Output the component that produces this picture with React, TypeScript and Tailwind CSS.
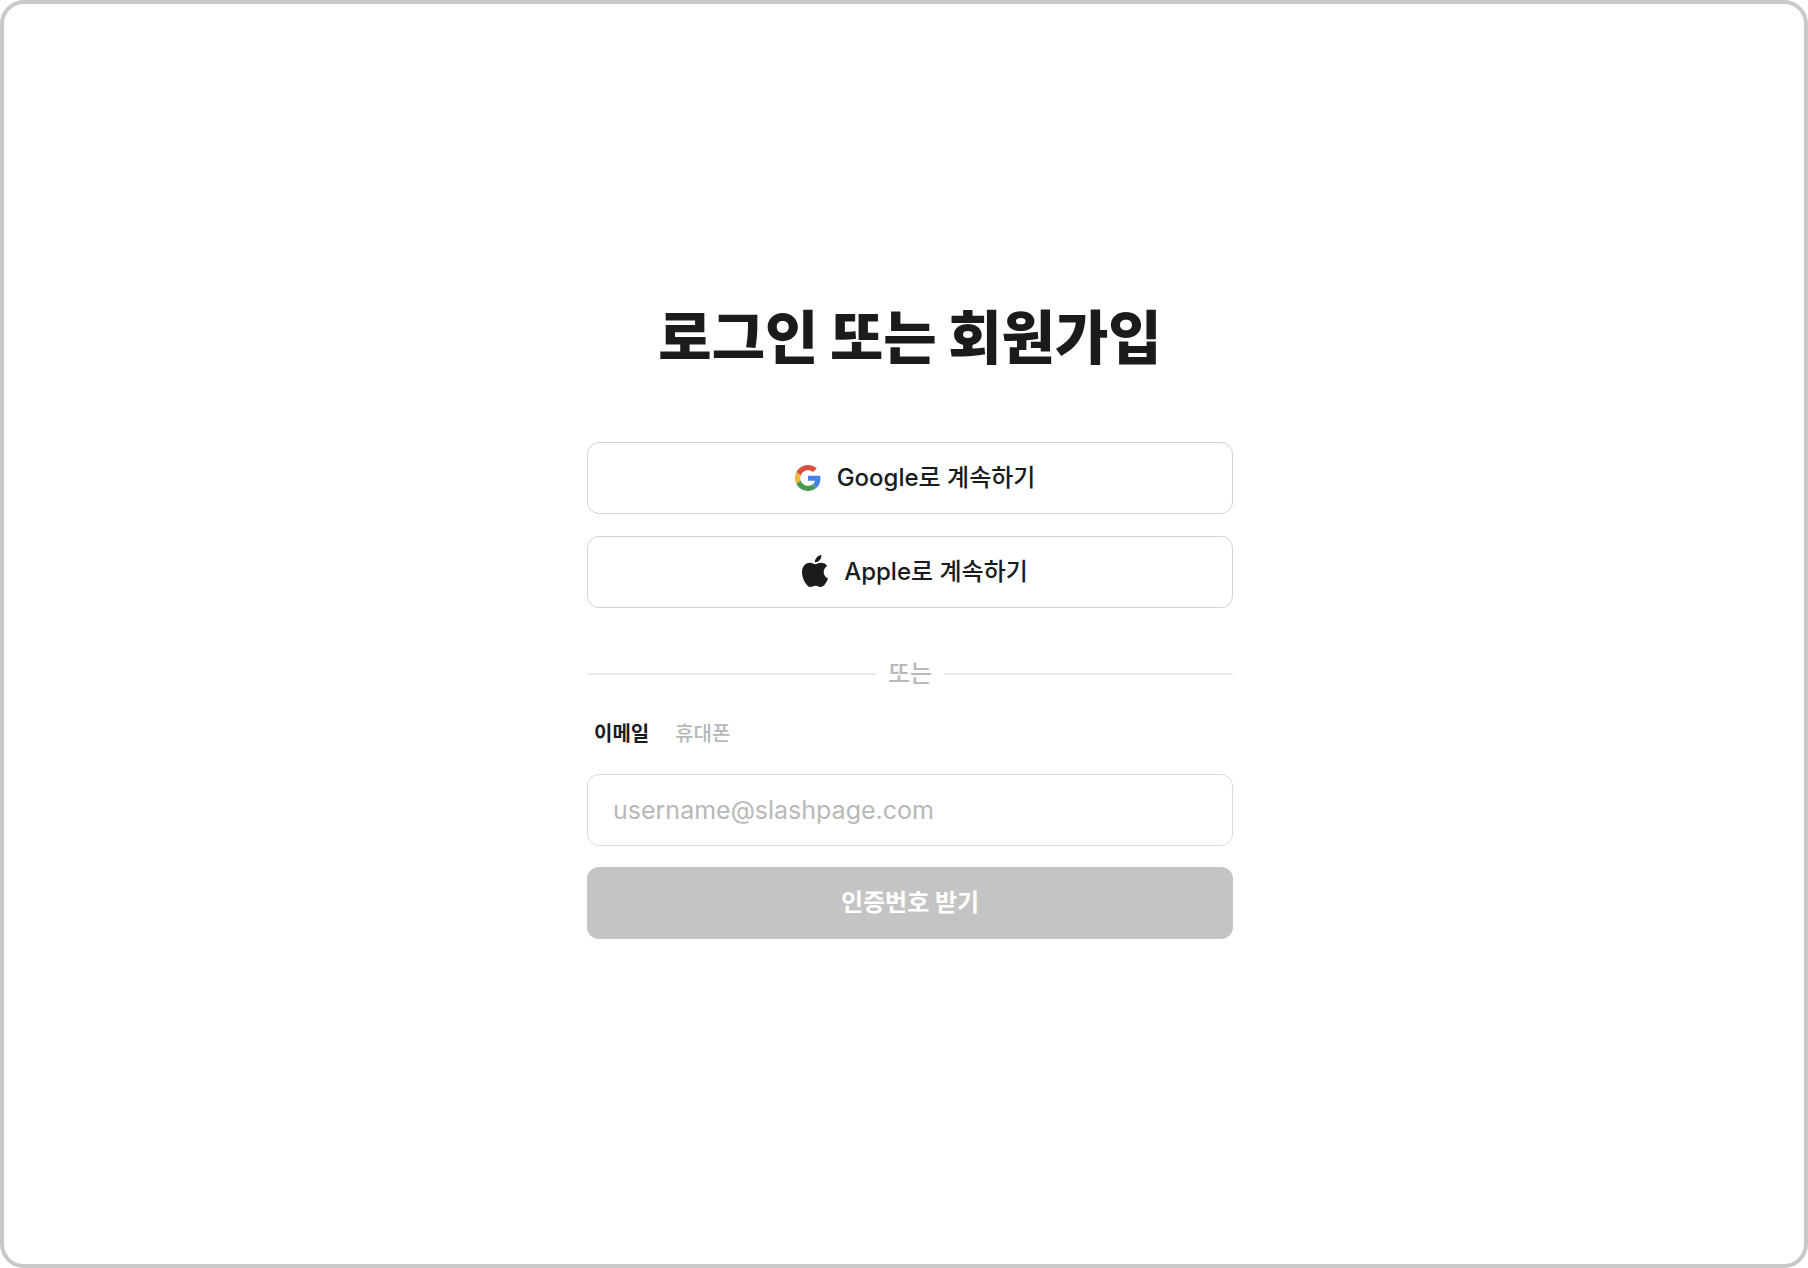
import { useState } from "react";

function GoogleLogo() {
  return (
    <svg viewBox="0 0 48 48" className="size-[26px] shrink-0" aria-hidden="true">
      <path fill="#d94f3d" d="M24 9.5c3.54 0 6.71 1.22 9.21 3.6l6.85-6.85C35.9 2.38 30.47 0 24 0 14.62 0 6.51 5.38 2.56 13.22l7.98 6.19C12.43 13.72 17.74 9.5 24 9.5z" />
      <path fill="#4580ec" d="M46.98 24.55c0-1.57-.15-3.09-.38-4.55H24v9.02h12.94c-.58 2.96-2.26 5.48-4.78 7.18l7.73 6c4.51-4.18 7.09-10.36 7.09-17.65z" />
      <path fill="#f2b63c" d="M10.53 28.59c-.48-1.45-.76-2.99-.76-4.59s.27-3.14.76-4.59l-7.98-6.19C.92 16.46 0 20.12 0 24c0 3.88.92 7.54 2.56 10.78l7.97-6.19z" />
      <path fill="#489a54" d="M24 48c6.48 0 11.93-2.13 15.89-5.81l-7.73-6c-2.15 1.45-4.92 2.3-8.16 2.3-6.26 0-11.57-4.22-13.47-9.91l-7.98 6.19C6.51 42.62 14.62 48 24 48z" />
    </svg>
  );
}

function AppleLogo() {
  return (
    <svg viewBox="0 0 814 1000" className="mb-0.5 h-8 w-[26px] shrink-0" fill="#1a1b1c" aria-hidden="true">
      <path d="M788.1 340.9c-5.8 4.5-108.2 62.2-108.2 190.5 0 148.4 130.3 200.9 134.2 202.2-.6 3.2-20.7 71.9-68.7 141.9-42.8 61.6-87.5 123.1-155.5 123.1s-85.5-39.5-164-39.5c-76.5 0-103.7 40.8-165.9 40.8s-105.6-57-155.5-127C46.7 790.7 0 663 0 541.8c0-194.4 126.4-297.5 250.8-297.5 66.1 0 121.2 43.4 162.7 43.4 39.5 0 101.1-46 176.3-46 28.5 0 130.9 2.6 198.3 99.2zm-234-181.5c31.1-36.9 53.1-88.1 53.1-139.3 0-7.1-.6-14.3-1.9-20.1-50.6 1.9-110.8 33.7-147.1 75.8-28.5 32.4-55.1 83.6-55.1 135.5 0 7.8 1.3 15.6 1.9 18.1 3.2.6 8.4 1.3 13.6 1.3 45.4 0 102.5-30.4 135.5-71.3z" />
    </svg>
  );
}

const socialButton =
  "flex h-[72px] w-full items-center justify-center gap-4 rounded-xl border border-[#d2d2d2] bg-white pl-[10px] text-2xl font-medium";

const tabButton = "font-medium text-[#b8b8b8] aria-selected:font-bold aria-selected:text-[#1a1b1c]";

export default function App() {
  const [tab, setTab] = useState("email");
  const [value, setValue] = useState("");

  return (
    <main className="flex min-h-screen items-start justify-center rounded-[24px] border-4 border-[#c9c9c9] bg-white pt-[294px] pb-16 pl-3 font-['Inter','Noto_Sans_CJK_KR',sans-serif] text-[#1a1b1c]">
      <section className="w-full max-w-[646px]">
        <h1 className="text-center text-[58px] leading-[80px] font-black whitespace-nowrap">로그인 또는 회원가입</h1>

        <div className="mt-16 flex flex-col gap-[22px]">
          <button type="button" className={socialButton}>
            <GoogleLogo />
            <span>Google로 계속하기</span>
          </button>
          <button type="button" className={socialButton}>
            <AppleLogo />
            <span>Apple로 계속하기</span>
          </button>
        </div>

        <div className="mt-12 flex items-center gap-3 text-2xl leading-9 font-medium text-[#b8b8b8]">
          <span className="h-0.5 flex-1 bg-[#ebebeb]" />
          <span>또는</span>
          <span className="h-0.5 flex-1 bg-[#ebebeb]" />
        </div>

        <form onSubmit={(e) => e.preventDefault()}>
          <div role="tablist" className="mt-[26px] flex gap-[26px] px-[7px] text-xl leading-8">
            <button type="button" role="tab" aria-selected={tab === "email"} onClick={() => setTab("email")} className={tabButton}>
              이메일
            </button>
            <button type="button" role="tab" aria-selected={tab === "phone"} onClick={() => setTab("phone")} className={tabButton}>
              휴대폰
            </button>
          </div>
          <input
            type={tab === "email" ? "email" : "tel"}
            aria-label={tab === "email" ? "이메일" : "휴대폰"}
            value={value}
            onChange={(e) => setValue(e.target.value)}
            placeholder="username@slashpage.com"
            className="mt-6 block h-[72px] w-full rounded-xl border border-[#dcdcdc] bg-white px-[25px] text-[25px] placeholder:text-[#b8b8b8]"
          />
          <button type="submit" className="mt-[21px] h-[72px] w-full rounded-xl bg-[#c4c4c4] text-2xl font-bold text-white">
            인증번호 받기
          </button>
        </form>
      </section>
    </main>
  );
}
